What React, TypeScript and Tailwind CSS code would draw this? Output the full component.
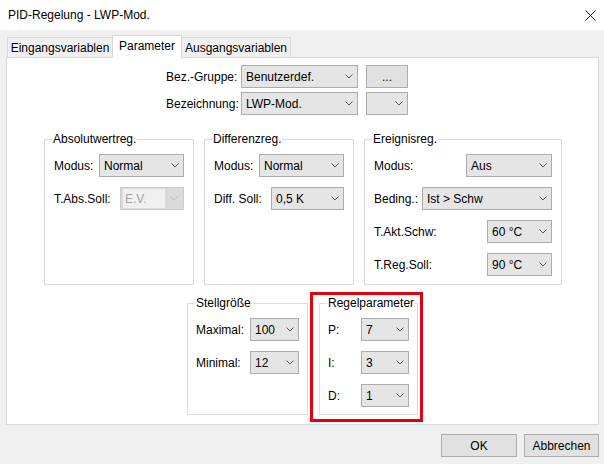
import React from 'react';

function Chevron({ color = '#5a5a5a' }: { color?: string }) {
  return (
    <svg width="8" height="5" viewBox="0 0 8 5" className="shrink-0">
      <path d="M0.5 0.5L4 4L7.5 0.5" fill="none" stroke={color} strokeWidth={1} />
    </svg>
  );
}

function Combo({ value, className }: { value?: string; className: string }) {
  return (
    <div className={`flex h-[23px] items-center justify-between border border-[#acacac] bg-[#e5e5e5] pl-[4px] pr-[4px] ${className}`}>
      <span className="whitespace-nowrap">{value}</span>
      <Chevron />
    </div>
  );
}

function DisabledCombo({ value, className }: { value: string; className: string }) {
  return (
    <div className={`flex h-[23px] items-center justify-between border border-[#cccccc] bg-[#dadada] pl-[2px] pr-[5px] ${className}`}>
      <span className="flex h-[19px] w-[42px] items-center bg-[#f0f0f0] pl-[2px] text-[#a3a3a3]">{value}</span>
      <Chevron color="#bdbdbd" />
    </div>
  );
}

function Group({ title, className, children }: { title: string; className: string; children: React.ReactNode }) {
  return (
    <div className={`relative border border-[#dcdcdc] ${className}`}>
      <span className="absolute -top-[9px] left-[7px] bg-white px-[1px] leading-[16px]">{title}</span>
      <div className="flex flex-col gap-[10px] pt-[14px]">{children}</div>
    </div>
  );
}

function Row({ label, children }: { label: string; children: React.ReactNode }) {
  return (
    <div className="flex h-[23px] items-center justify-between">
      <span className="whitespace-nowrap">{label}</span>
      {children}
    </div>
  );
}

function Button({ children, className }: { children: React.ReactNode; className: string }) {
  return (
    <div className={`flex h-[23px] items-center justify-center border border-[#adadad] bg-[#e1e1e1] ${className}`}>
      {children}
    </div>
  );
}

export default function App() {
  return (
    <div
      className="flex h-[464px] w-[604px] flex-col bg-[#f0f0f0] text-[12px] leading-[16px] text-black"
      style={{ fontFamily: '"Liberation Sans", Arial, sans-serif' }}
    >
      {/* title bar */}
      <div className="flex h-[30px] items-center justify-between bg-white pl-[8px] pr-[8px]">
        <span>PID-Regelung - LWP-Mod.</span>
        <svg width="11" height="11" viewBox="0 0 11 11">
          <path d="M0.5 0.5L10.5 10.5M10.5 0.5L0.5 10.5" stroke="#111" strokeWidth={1} />
        </svg>
      </div>

      {/* tabs */}
      <div className="flex items-end pl-[7px] pt-[5px]">
        <div className="flex h-[20px] w-[106px] items-center justify-center border border-b-0 border-[#d9d9d9] bg-[#f0f0f0]">
          Eingangsvariablen
        </div>
        <div className="relative z-10 -mb-[1px] -ml-[1px] flex h-[23px] w-[70px] items-start justify-center border border-b-0 border-[#d9d9d9] bg-white pt-[2px]">
          Parameter
        </div>
        <div className="-ml-[1px] flex h-[20px] w-[110px] items-center justify-center border border-b-0 border-[#d9d9d9] bg-[#f0f0f0]">
          Ausgangsvariablen
        </div>
      </div>

      {/* tab panel */}
      <div className="ml-[6px] flex h-[368px] w-[593px] flex-col border border-[#d9d9d9] bg-white">
        <div className="ml-[159px] mt-[7px] flex items-center">
          <span className="w-[75px]">Bez.-Gruppe:</span>
          <Combo value="Benutzerdef." className="w-[117px]" />
          <Button className="ml-[8px] w-[42px]">...</Button>
        </div>
        <div className="ml-[159px] mt-[4px] flex items-center">
          <span className="w-[75px]">Bezeichnung:</span>
          <Combo value="LWP-Mod." className="w-[117px]" />
          <Combo className="ml-[8px] w-[42px]" />
        </div>

        <div className="ml-[37px] mt-[24px] flex gap-[10px]">
          <Group title="Absolutwertreg." className="h-[146px] w-[150px] px-[9px]">
            <Row label="Modus:">
              <Combo value="Normal" className="w-[85px]" />
            </Row>
            <Row label="T.Abs.Soll:">
              <DisabledCombo value="E.V." className="w-[64px]" />
            </Row>
          </Group>
          <Group title="Differenzreg." className="h-[146px] w-[150px] px-[9px]">
            <Row label="Modus:">
              <Combo value="Normal" className="w-[85px]" />
            </Row>
            <Row label="Diff. Soll:">
              <Combo value="0,5 K" className="w-[73px]" />
            </Row>
          </Group>
          <Group title="Ereignisreg." className="h-[146px] w-[198px] px-[9px]">
            <Row label="Modus:">
              <Combo value="Aus" className="w-[86px]" />
            </Row>
            <Row label="Beding.:">
              <Combo value={'Ist > Schw'} className="w-[130px]" />
            </Row>
            <Row label="T.Akt.Schw:">
              <Combo value="60 °C" className="w-[65px]" />
            </Row>
            <Row label="T.Reg.Soll:">
              <Combo value="90 °C" className="w-[65px]" />
            </Row>
          </Group>
        </div>

        <div className="ml-[180px] mt-[7px] flex items-start">
          <Group title="Stellgröße" className="mt-[11px] h-[112px] w-[121px] px-[8px]">
            <Row label="Maximal:">
              <Combo value="100" className="w-[49px]" />
            </Row>
            <Row label="Minimal:">
              <Combo value="12" className="w-[49px]" />
            </Row>
          </Group>
          <div className="ml-[2px] border-[3px] border-[#e3000f] pb-[4px] pl-[6px] pr-[2px] pt-[8px]">
            <Group title="Regelparameter" className="h-[112px] w-[99px] px-[8px]">
              <Row label="P:">
                <Combo value="7" className="w-[48px]" />
              </Row>
              <Row label="I:">
                <Combo value="3" className="w-[48px]" />
              </Row>
              <Row label="D:">
                <Combo value="1" className="w-[48px]" />
              </Row>
            </Group>
          </div>
        </div>
      </div>

      {/* dialog buttons */}
      <div className="mr-[5px] mt-[9px] flex justify-end gap-[7px]">
        <Button className="w-[76px]">OK</Button>
        <Button className="w-[75px]">Abbrechen</Button>
      </div>
    </div>
  );
}
